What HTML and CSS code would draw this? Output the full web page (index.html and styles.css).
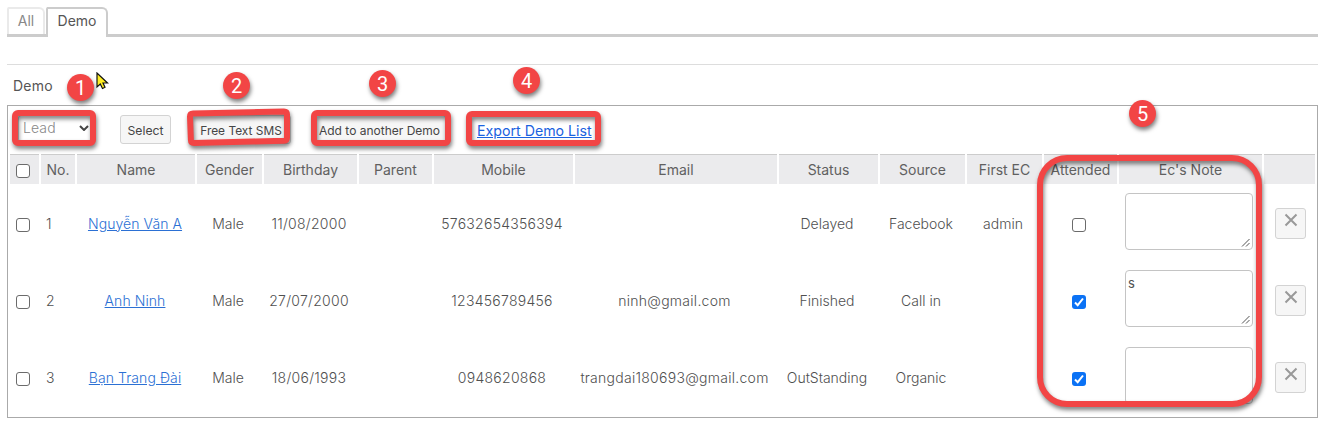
FILE: index.html
```
<!DOCTYPE html>
<html lang="vi">
<head>
<meta charset="utf-8">
<title>Demo</title>
<link rel="stylesheet" href="styles.css">
</head>
<body>
<nav class="tabs">
  <a class="tab">All</a>
  <a class="tab tab-active">Demo</a>
</nav>
<main class="content">
  <h1 class="title">Demo</h1>
  <section class="panel">
    <div class="toolbar">
      <div class="select">Lead<svg class="chevron" viewBox="0 0 10 6"><path d="M1 1l4 4 4-4"/></svg></div>
      <button class="btn btn-select">Select</button>
      <button class="btn btn-sms">Free Text SMS</button>
      <button class="btn btn-add">Add to another Demo</button>
      <a class="export">Export Demo List</a>
    </div>
    <table class="grid">
      <colgroup>
        <col class="c-check"><col class="c-no"><col class="c-name"><col class="c-gender"><col class="c-birth"><col class="c-parent"><col class="c-mobile"><col class="c-email"><col class="c-status"><col class="c-source"><col class="c-ec"><col class="c-att"><col class="c-note"><col class="c-del">
      </colgroup>
      <thead>
        <tr><th><i class="check"></i></th><th>No.</th><th>Name</th><th>Gender</th><th>Birthday</th><th>Parent</th><th>Mobile</th><th>Email</th><th>Status</th><th>Source</th><th>First EC</th><th>Attended</th><th>Ec's Note</th><th></th></tr>
      </thead>
      <tbody>
        <tr>
          <td><i class="check"></i></td><td class="no">1</td><td><a class="link">Nguyễn Văn A</a></td><td>Male</td><td class="num">11/08/2000</td><td></td><td class="num">57632654356394</td><td></td><td>Delayed</td><td>Facebook</td><td>admin</td>
          <td><i class="check"></i></td>
          <td><div class="note"><svg class="grip" viewBox="0 0 9 9"><path d="M1 8.500L8.500 1M5 8.500L8.500 5"/></svg></div></td>
          <td><button class="del"><svg viewBox="0 0 14 14"><path d="M1.500 1.500l11 11M12.500 1.500l-11 11"/></svg></button></td>
        </tr>
        <tr>
          <td><i class="check"></i></td><td class="no">2</td><td><a class="link">Anh Ninh</a></td><td>Male</td><td class="num">27/07/2000</td><td></td><td class="num">123456789456</td><td class="num">ninh@gmail.com</td><td>Finished</td><td>Call in</td><td></td>
          <td><i class="check checked"><svg viewBox="0 0 14 14"><path d="M3 7.500L5.700 10.200L11 3.500"/></svg></i></td>
          <td><div class="note">s<svg class="grip" viewBox="0 0 9 9"><path d="M1 8.500L8.500 1M5 8.500L8.500 5"/></svg></div></td>
          <td><button class="del"><svg viewBox="0 0 14 14"><path d="M1.500 1.500l11 11M12.500 1.500l-11 11"/></svg></button></td>
        </tr>
        <tr>
          <td><i class="check"></i></td><td class="no">3</td><td><a class="link">Bạn Trang Đài</a></td><td>Male</td><td class="num">18/06/1993</td><td></td><td class="num">0948620868</td><td class="num">trangdai180693@gmail.com</td><td>OutStanding</td><td>Organic</td><td></td>
          <td><i class="check checked"><svg viewBox="0 0 14 14"><path d="M3 7.500L5.700 10.200L11 3.500"/></svg></i></td>
          <td><div class="note"></div></td>
          <td><button class="del"><svg viewBox="0 0 14 14"><path d="M1.500 1.500l11 11M12.500 1.500l-11 11"/></svg></button></td>
        </tr>
      </tbody>
    </table>
  </section>
</main>

<div class="frame frame-1"></div>
<svg class="frame-2" viewBox="0 0 106 40"><path d="M7 6.500L98 4.500Q101 4.500 101 7.500V30.500Q101 33.500 98 33.700L8 36Q5 36 4.900 33L4 9.500Q4 6.500 7 6.500Z"/></svg>
<div class="frame frame-3"></div>
<div class="frame frame-4"></div>
<div class="frame frame-5"></div>
<span class="badge badge-1">1</span>
<span class="badge badge-2">2</span>
<span class="badge badge-3">3</span>
<span class="badge badge-4">4</span>
<span class="badge badge-5">5</span>
<svg class="cursor" viewBox="0 0 13 18"><path d="M1 1V15L4.300 12L6.500 16.500L9 15.300L7 11H11.500Z"/></svg>
</body>
</html>
```

FILE: styles.css
```
* { box-sizing: border-box; }
body {
  margin: 0;
  height: 424px;
  overflow: hidden;
  position: relative;
  padding: 7px 4px 0 7px;
  background: #fff;
  color: #555;
  font-family: Inter, "Liberation Sans", sans-serif;
  font-size: 14px;
}

/* Tabs */
.tabs { display: flex; height: 30px; border-bottom: 3px solid #ccc; }
.tab {
  width: 38px;
  height: 27px;
  border: 2px solid #eaeaea;
  border-bottom: 0;
  border-radius: 2px 6px 0 0;
  color: #888;
  line-height: 23px;
  text-align: center;
}
.tab-active {
  width: 62px;
  height: 30px;
  margin-left: 1px;
  border-color: #ccc;
  background: #fff;
  color: #555;
}

/* Panel */
.content { margin-top: 27px; border-top: 1px solid #ddd; }
.title { margin: 0; padding: 12px 0 0 6px; height: 40px; font-size: 14px; font-weight: 400; line-height: 18px; letter-spacing: .2px; }
.panel { width: 1311px; height: 313px; border: 1px solid #aaa; }
.toolbar { display: flex; align-items: flex-start; height: 46px; padding: 9px 0 0 10px; }
.select {
  display: flex;
  justify-content: space-between;
  width: 76px;
  height: 27px;
  padding: 0 4px 0 4px;
  border: 1px solid #ccc;
  border-radius: 3px;
  color: #888;
  font-weight: 300;
  letter-spacing: .1px;
  line-height: 23px;
}
.chevron { width: 10px; height: 6px; margin-top: 9px; fill: none; stroke: #444; stroke-width: 2; }
.btn {
  height: 29px;
  padding: 1px 0 0;
  border: 1px solid #d3d3d3;
  border-radius: 3px;
  background: #f6f6f6;
  color: #454545;
  font: 12px Inter, sans-serif;
  white-space: nowrap;
}
.btn-select { width: 51px; margin-left: 26px; font-size: 12.2px; }
.btn-sms { width: 100px; margin-left: 20px; font-size: 11.9px; }
.btn-add { width: 134px; margin-left: 21px; padding-left: 1px; }
.export { margin: 7px 0 0 31px; color: #1a62e0; font-size: 14.2px; line-height: 18px; text-decoration: underline; }

/* Table */
.grid { width: 1309px; table-layout: fixed; border-spacing: 2px; }
.c-check { width: 29px; } .c-no { width: 34px; } .c-name { width: 118px; } .c-gender { width: 65px; }
.c-birth { width: 93px; } .c-parent { width: 73px; } .c-mobile { width: 139px; } .c-email { width: 202px; }
.c-status { width: 99px; } .c-source { width: 85px; } .c-ec { width: 75px; } .c-att { width: 73px; }
.c-note { width: 143px; } .c-del { width: 51px; }
th {
  height: 30px;
  padding: 0;
  border-top: 1px solid #ccc;
  background: #ebebed;
  color: #606060;
  font-weight: 400;
  white-space: nowrap;
}
td { height: 75px; padding: 0 3px 0 0; color: #505050; font-weight: 300; text-align: center; white-space: nowrap; }
td.num { letter-spacing: .27px; }
td.no { padding-left: 5px; text-align: left; }
td:nth-child(3) { padding-right: 2px; letter-spacing: .08px; }
.link { color: #2b70d4; text-decoration: underline; }
.check { display: block; width: 14px; height: 14px; margin: 2px auto 0 6px; border: 1px solid #6b6b6b; border-radius: 3px; background: #fff; }
td:nth-child(12) .check { margin-left: 28px; }
.checked { border: 0; background: #0b72f5; }
.checked svg { display: block; width: 14px; height: 14px; fill: none; stroke: #fff; stroke-width: 2; }
.note {
  position: relative;
  width: 128px;
  height: 57px;
  margin: -4px 0 0 6px;
  padding: 4px 2px;
  border: 1px solid #c4c4c4;
  border-radius: 4px;
  font: 13px/16px Inter, sans-serif;
  text-align: left;
}
.grip { position: absolute; right: 2px; bottom: 2px; width: 9px; height: 9px; fill: none; stroke: #555; stroke-width: 1; }
.del { display: block; width: 31px; height: 31px; margin: -1px 0 0 11px; padding: 0 0 6px; border: 1px solid #d3d3d3; border-radius: 3px; background: #f6f6f6; }
.del svg { display: block; width: 14px; height: 14px; margin: auto; fill: none; stroke: #999; stroke-width: 2; }

/* Callouts */
.frame, .frame-2, .badge, .cursor { position: absolute; }
.frame { border: 6px solid #f24545; border-radius: 6px; filter: drop-shadow(1px 3px 2px rgba(0, 0, 0, .5)); }
.frame-1 { left: 12px; top: 110px; width: 84px; height: 36px; }
.frame-2 { left: 186px; top: 107px; width: 106px; height: 40px; fill: none; stroke: #f24545; stroke-width: 6; filter: drop-shadow(1px 3px 2px rgba(0, 0, 0, .5)); }
.frame-3 { left: 311px; top: 110px; width: 140px; height: 36px; }
.frame-4 { left: 466px; top: 111px; width: 135px; height: 35px; }
.frame-5 { left: 1037px; top: 155px; width: 225px; height: 252px; border-radius: 30px; }
.badge {
  width: 27px;
  height: 27px;
  border-radius: 50%;
  background: #f24545;
  color: #fff;
  font: 20px/28px Roboto, sans-serif;
  text-align: center;
  box-shadow: 1px 3px 4px rgba(0, 0, 0, .5);
}
.badge-1 { left: 67px; top: 74px; }
.badge-2 { left: 223px; top: 72px; }
.badge-3 { left: 369px; top: 70px; }
.badge-4 { left: 513px; top: 67px; }
.badge-5 { left: 1129px; top: 100px; }
.cursor { left: 96px; top: 72px; width: 13px; height: 18px; fill: #ffee22; stroke: #111; stroke-width: 1.2; }
```
